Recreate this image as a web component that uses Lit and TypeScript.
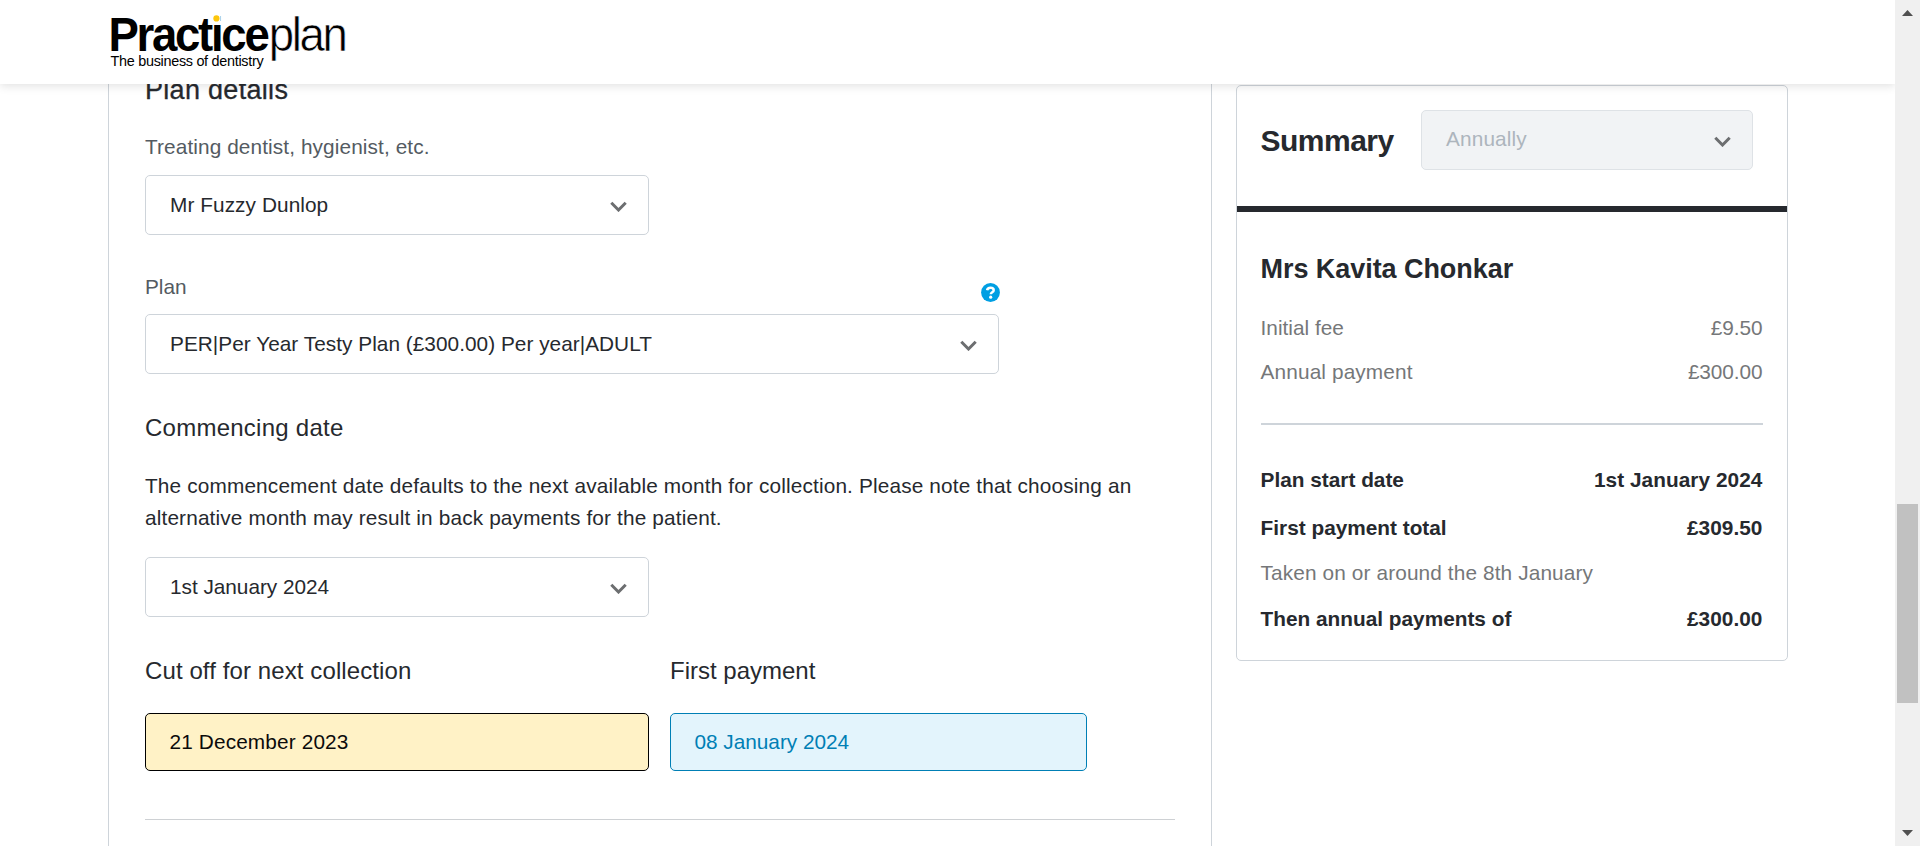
import { LitElement, html, css, svg } from "lit";
import { customElement, property } from "lit/decorators.js";

@customElement("pp-logo")
class PpLogo extends LitElement {
  static styles = css`
    :host { display: block; width: 240px; height: 70px; }
    svg { display: block; font-family: "Liberation Sans", Arial, sans-serif; }
    .bold { font-size: 49px; font-weight: 700; letter-spacing: -2.45px; }
    .thin { font-size: 49px; letter-spacing: -2.5px; stroke: #fff; stroke-width: .6px; }
    .tag { font-size: 15px; letter-spacing: -0.3px; }
  `;
  render() {
    return html`<svg width="240" height="70" viewBox="108 0 240 70">
      ${svg`
        <text class="thin" transform="translate(268.8 50.5) scale(.93 1)">plan</text>
        <text class="bold" transform="translate(108.4 50.7) scale(.93 1)">Practice</text>
        <rect x="212.6" y="13" width="8" height="10" fill="#fff"/>
        <circle cx="216.4" cy="18.4" r="3.1" fill="#fdc60b"/>
        <text class="tag" transform="translate(110.6 66) scale(.96 1)">The business of dentistry</text>
      `}
    </svg>`;
  }
}

@customElement("pp-select")
class PpSelect extends LitElement {
  @property() value = "";
  @property({ type: Boolean, reflect: true }) disabled = false;
  static styles = css`
    :host {
      display: flex; align-items: center; justify-content: space-between;
      box-sizing: border-box; height: 60px; padding: 0 21px 0 24px;
      border: 1px solid #ced4da; border-radius: 5px; background: #fff; color: #26292e;
    }
    :host([disabled]) { background: #f1f3f5; border-color: #dee2e6; color: #adb5bd; }
    :host([disabled]) span { padding-bottom: 2px; }
    svg { display: block; margin-top: 3px; }
  `;
  render() {
    return html`<span>${this.value}</span>
      <svg width="17" height="11" viewBox="0 0 17 11"><path d="M1.3 1.8 8.5 9 15.7 1.8" fill="none" stroke="#6c6e70" stroke-width="3"/></svg>`;
  }
}

@customElement("app-root")
class AppRoot extends LitElement {
  static styles = css`
    :host {
      display: grid; grid-template-columns: 1fr 25px; height: 846px; overflow: hidden;
      background: #fff; color: #26292e;
      font: 20.8px/32px "Liberation Sans", Arial, sans-serif;
    }
    .page { height: 846px; overflow: hidden; }
    header {
      position: relative; z-index: 2; box-sizing: border-box; height: 84px; padding-left: 108px;
      background: #fff; box-shadow: 0 2px 9px rgba(0, 0, 0, .12);
    }
    .columns { display: flex; align-items: flex-start; gap: 24px; padding-left: 108px; }
    .details {
      box-sizing: border-box; width: 1104px; height: 782px; margin-top: -20px; padding: 8px 36px 0 36px;
      border: solid #ced4da; border-width: 0 1px;
    }
    h1, h2, h3, h4, p, hr { margin: 0; font-weight: 400; }
    h2 { font-size: 27px; line-height: 36px; letter-spacing: .3px; -webkit-text-stroke: .3px #26292e; }
    h3 { font-size: 24px; line-height: 36px; }
    .label { color: #545b62; }
    .treating { margin-top: 23px; letter-spacing: .1px; }
    .half { width: 504px; }
    .wide { width: 854px; }
    .treating + pp-select { margin-top: 12px; letter-spacing: .07px; }
    .planrow { display: flex; justify-content: space-between; align-items: flex-start; width: 855px; margin-top: 36px; }
    .planrow svg { margin-top: 12px; display: block; }
    .planrow + pp-select { margin-top: 11px; letter-spacing: .03px; }
    .commencing { margin-top: 36px; letter-spacing: .25px; }
    .note { margin-top: 24px; letter-spacing: .148px; white-space: nowrap; }
    .note + pp-select { margin-top: 23px; letter-spacing: -.03px; }
    .dates { display: flex; gap: 21px; margin-top: 36px; }
    .dates .half h3 { letter-spacing: .1px; }
    .first { width: 417px; }
    .box {
      box-sizing: border-box; height: 58px; margin-top: 24px; padding: 12px 23.5px;
      border: 1px solid #000; border-radius: 5px; background: #fff2c6; color: #0b0b0b; letter-spacing: .13px;
    }
    .box.info { border-color: #007fb5; background: #e3f4fc; color: #007fb5; letter-spacing: -.02px; }
    .details hr { margin-top: 48px; border: 0; height: 1px; background: #ced1d4; }

    .summary {
      box-sizing: border-box; width: 552px; height: 576px; margin-top: 1px;
      border: 1px solid #ced4da; border-radius: 5px;
    }
    .top { display: flex; box-sizing: border-box; height: 126px; padding: 24px 34px 0 23.5px; border-bottom: 6px solid #26292e; justify-content: space-between; }
    h1 { font-size: 30px; line-height: 40px; font-weight: 700; letter-spacing: -.5px; margin-top: 11px; }
    .top pp-select { width: 332px; letter-spacing: .13px; }
    .body { padding: 39px 24.5px 0 23.6px; }
    h4 { font-size: 27px; line-height: 36px; font-weight: 700; letter-spacing: -.06px; }
    .row { display: flex; justify-content: space-between; height: 32px; white-space: nowrap; }
    .muted { color: #757779; letter-spacing: .12px; }
    .fee span:first-child { letter-spacing: 0; }
    .muted .amount { letter-spacing: -.08px; }
    .strong { font-weight: 700; }
    .strong span:last-child { letter-spacing: .06px; }
    .fee { margin-top: 25px; }
    .annual { margin-top: 12px; }
    .body hr { border: 0; height: 2px; margin-top: 35px; background: #ced4da; }
    .start { margin-top: 39px; }
    .total { margin-top: 16px; }
    .taken { margin-top: 13px; }
    .then { margin-top: 14px; }

    .scroll { display: flex; flex-direction: column; align-items: center; background: #f0f0f0; }
    .scroll svg { display: block; }
    .thumb { width: 21px; height: 199px; margin: 488px 0 127px; background: #c1c1c1; }
  `;

  render() {
    return html`
      <div class="page">
        <header><pp-logo></pp-logo></header>
        <div class="columns">
          <section class="details">
            <h2>Plan details</h2>
            <div class="label treating">Treating dentist, hygienist, etc.</div>
            <pp-select class="half" value="Mr Fuzzy Dunlop"></pp-select>
            <div class="planrow">
              <span class="label">Plan</span>
              <svg width="19" height="19" viewBox="0 0 19 19">
                <circle cx="9.5" cy="9.5" r="9.4" fill="#009fe3"/>
                <path d="M6.1 7.3C6.4 5.3 7.8 4.7 9.5 4.7c1.9 0 3.2 1 3.2 2.5 0 2.2-2.9 2-2.9 4.1" fill="none" stroke="#fff" stroke-width="2.5"/>
                <circle cx="9.7" cy="14.2" r="1.6" fill="#fff"/>
              </svg>
            </div>
            <pp-select class="wide" value="PER|Per Year Testy Plan (£300.00) Per year|ADULT"></pp-select>
            <h3 class="commencing">Commencing date</h3>
            <p class="note">The commencement date defaults to the next available month for collection. Please note that choosing an<br>alternative month may result in back payments for the patient.</p>
            <pp-select class="half" value="1st January 2024"></pp-select>
            <div class="dates">
              <div class="half"><h3>Cut off for next collection</h3><div class="box">21 December 2023</div></div>
              <div class="first"><h3>First payment</h3><div class="box info">08 January 2024</div></div>
            </div>
            <hr>
          </section>
          <aside class="summary">
            <div class="top"><h1>Summary</h1><pp-select disabled value="Annually"></pp-select></div>
            <div class="body">
              <h4>Mrs Kavita Chonkar</h4>
              <div class="row muted fee"><span>Initial fee</span><span class="amount">£9.50</span></div>
              <div class="row muted annual"><span>Annual payment</span><span class="amount">£300.00</span></div>
              <hr>
              <div class="row strong start"><span>Plan start date</span><span>1st January 2024</span></div>
              <div class="row strong total"><span>First payment total</span><span>£309.50</span></div>
              <div class="row muted taken"><span>Taken on or around the 8th January</span></div>
              <div class="row strong then"><span>Then annual payments of</span><span>£300.00</span></div>
            </div>
          </aside>
        </div>
      </div>
      <div class="scroll">
        <svg width="11" height="16" viewBox="0 0 11 16"><path d="M0 16 5.5 10 11 16z" fill="#505050"/></svg>
        <div class="thumb"></div>
        <svg width="11" height="6" viewBox="0 0 11 6"><path d="M0 0h11L5.5 6z" fill="#505050"/></svg>
      </div>
    `;
  }
}
